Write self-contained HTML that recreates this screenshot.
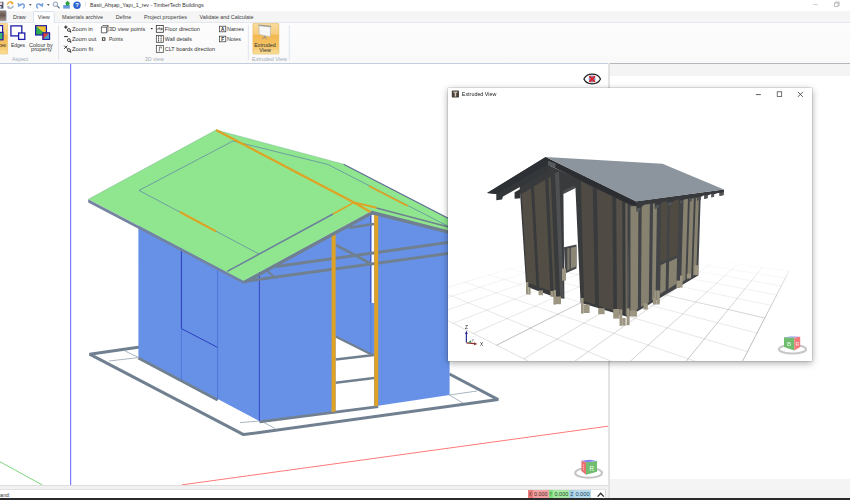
<!DOCTYPE html>
<html><head><meta charset="utf-8"><title>TimberTech Buildings</title>
<style>
html,body{margin:0;padding:0;}
body{width:850px;height:500px;overflow:hidden;position:relative;background:#fff;font-family:"Liberation Sans",sans-serif;font-size:5.4px;color:#333;}
.abs{position:absolute;}

.t{position:absolute;white-space:nowrap;line-height:1;}

#titlebar{left:0;top:0;width:850px;height:10.5px;background:#fff;}
#tabrow{left:0;top:10.5px;width:850px;height:11.5px;background:#f5f5f6;}
#ribbon{left:0;top:21.6px;width:850px;height:40.6px;background:linear-gradient(#fdfdfd,#f9f9f9);border-top:1px solid #e3e8f0;border-bottom:1px solid #c3cfdf;box-sizing:content-box;z-index:2;}

</style></head><body>
<div class="abs" id="titlebar"></div><div class="abs" id="tabrow"></div><div class="abs" id="ribbon"></div>
<svg class="abs" style="left:0;top:0;z-index:4" width="850" height="66" viewBox="0 0 850 66">
<defs><linearGradient id="og" x1="0" y1="0" x2="0" y2="1"><stop offset="0" stop-color="#f9dc9e"/><stop offset="0.35" stop-color="#f7cd7c"/><stop offset="0.39" stop-color="#f3b84f"/><stop offset="0.75" stop-color="#f5c466"/><stop offset="1" stop-color="#fae09c"/></linearGradient><linearGradient id="bg2" x1="0" y1="0" x2="0" y2="1"><stop offset="0" stop-color="#907c70"/><stop offset="0.45" stop-color="#6a584e"/><stop offset="1" stop-color="#a8948a"/></linearGradient></defs>
<rect x="-3" y="1.8" width="6.4" height="6.8" fill="#46526e"/><rect x="-2" y="2.4" width="4.2" height="2.6" fill="#f6dada"/><rect x="-2" y="6" width="3.4" height="2.6" fill="#c8ccd6"/>
<path d="M7.4 4.6 A3.1 3.1 0 0 1 12.6 2.8" fill="none" stroke="#eda832" stroke-width="1.5"/><path d="M11.6 1.2 L14 3.6 L11 4.6 Z" fill="#eda832"/><path d="M13.2 5.6 A3.1 3.1 0 0 1 8 7.4" fill="none" stroke="#a9b6c6" stroke-width="1.5"/><path d="M9 9 L6.6 6.6 L9.6 5.6 Z" fill="#a9b6c6"/>
<path d="M19.4 5.6 Q22.6 2.6 24.2 5 Q25 6.6 23 8.4" fill="none" stroke="#7da4e2" stroke-width="1.5"/><path d="M17.6 2.6 L18 7 L21.8 5.4 Z" fill="#7da4e2"/>
<path d="M29 4.2 L31.6 4.2 L30.3 5.7 Z" fill="#222"/>
<path d="M41.6 5.6 Q38.4 2.6 36.8 5 Q36 6.6 38 8.4" fill="none" stroke="#7da4e2" stroke-width="1.5"/><path d="M43.4 2.6 L43 7 L39.2 5.4 Z" fill="#7da4e2"/>
<path d="M47 4.2 L49.6 4.2 L48.3 5.7 Z" fill="#222"/>
<circle cx="55.4" cy="4.2" r="2.3" fill="#eef4fa" stroke="#7a8a9a" stroke-width="0.8"/><line x1="57.2" y1="6.0" x2="59.6" y2="8.2" stroke="#6a7a8a" stroke-width="1.20" />
<rect x="63.2" y="5" width="6.6" height="3.6" fill="#6a9ae0"/><path d="M66 5.6 L66 3.4 L64.8 3.4 L67.6 0.8 L70.4 3.4 L69.2 3.4 L69.2 5.6 Z" fill="#2fa040"/>
<circle cx="77" cy="5.2" r="3.7" fill="#2a64d0"/><text x="77" y="7.4" font-size="6" font-weight="bold" fill="#fff" text-anchor="middle" font-family="Liberation Sans, sans-serif">?</text>
<line x1="85.4" y1="1.6" x2="85.4" y2="6.6" stroke="#d0d0d0" stroke-width="0.60" />
<text x="90.0" y="7.14" font-size="5.5" fill="#333" font-family="Liberation Sans, sans-serif" textLength="113.6" lengthAdjust="spacingAndGlyphs">Basit_Ahşap_Yapı_1_rev - TimberTech Buildings</text>
<line x1="813.2" y1="4.6" x2="817.8" y2="4.6" stroke="#bbb" stroke-width="0.70" />
<rect x="834.4" y="3" width="3.6" height="3.6" fill="#fff" stroke="#999" stroke-width="0.6"/><path d="M835.6 3 L835.6 2 L839.2 2 L839.2 5.6 L838 5.6" fill="none" stroke="#999" stroke-width="0.6"/>
<rect x="-1" y="10.6" width="7.2" height="10.4" rx="0.8" fill="url(#bg2)" stroke="#9fb4d8" stroke-width="0.6"/>
<path d="M33.5 22.6 L33.5 12.4 Q33.5 11.6 34.3 11.6 L53.3 11.6 Q54.1 11.6 54.1 12.4 L54.1 22.6 Z" fill="#fff" stroke="#cdd8e8" stroke-width="0.7"/>
<rect x="33.9" y="21.6" width="19.8" height="2" fill="#fdfdfe"/>
<text x="13.0" y="19.41" font-size="5.7" fill="#3c3c3c" font-family="Liberation Sans, sans-serif" textLength="12.8" lengthAdjust="spacingAndGlyphs">Draw</text>
<text x="37.8" y="19.41" font-size="5.7" fill="#3c3c3c" font-family="Liberation Sans, sans-serif" textLength="12.0" lengthAdjust="spacingAndGlyphs">View</text>
<text x="62.1" y="19.41" font-size="5.7" fill="#3c3c3c" font-family="Liberation Sans, sans-serif" textLength="40.9" lengthAdjust="spacingAndGlyphs">Materials archive</text>
<text x="115.7" y="19.41" font-size="5.7" fill="#3c3c3c" font-family="Liberation Sans, sans-serif" textLength="15.5" lengthAdjust="spacingAndGlyphs">Define</text>
<text x="144.0" y="19.41" font-size="5.7" fill="#3c3c3c" font-family="Liberation Sans, sans-serif" textLength="43.0" lengthAdjust="spacingAndGlyphs">Project properties</text>
<text x="199.6" y="19.41" font-size="5.7" fill="#3c3c3c" font-family="Liberation Sans, sans-serif" textLength="53.9" lengthAdjust="spacingAndGlyphs">Validate and Calculate</text>
<rect x="-20" y="23.4" width="27.6" height="30.6" rx="1" fill="url(#og)" stroke="#e6b95e" stroke-width="0.6"/>
<rect x="-6" y="25.6" width="8.6" height="9.4" fill="#fff" stroke="#1c1ca8" stroke-width="1.2"/>
<rect x="-6" y="32.4" width="9" height="7.4" fill="#3cb371" stroke="#1c1ca8" stroke-width="1.2"/>
<text x="-7.2" y="46.51" font-size="5.7" fill="#333" font-family="Liberation Sans, sans-serif" textLength="13.2" lengthAdjust="spacingAndGlyphs">Faces</text>
<rect x="10.9" y="25.9" width="10.9" height="10" fill="#fff" stroke="#1c1ca8" stroke-width="1.3"/>
<rect x="18.6" y="33" width="6.2" height="6.4" fill="#fff" stroke="#1c1ca8" stroke-width="1.3"/>
<text x="11.0" y="46.51" font-size="5.7" fill="#333" font-family="Liberation Sans, sans-serif" textLength="14.1" lengthAdjust="spacingAndGlyphs">Edges</text>
<rect x="35.6" y="25.7" width="10.8" height="9.3" fill="#f2c230"/><path d="M35.6 25.7 L46.4 35 L35.6 35 Z" fill="#2eaa50"/><rect x="35.6" y="25.7" width="10.8" height="9.3" fill="none" stroke="#1c1ca8" stroke-width="1.2"/>
<rect x="42.8" y="32.8" width="6.8" height="6.6" fill="#d84040"/><path d="M42.8 39.4 L49.6 32.8 L49.6 39.4 Z" fill="#4aa0c8"/><rect x="42.8" y="32.8" width="6.8" height="6.6" fill="none" stroke="#1c1ca8" stroke-width="1.1"/>
<text x="28.9" y="46.51" font-size="5.7" fill="#333" font-family="Liberation Sans, sans-serif" textLength="24.0" lengthAdjust="spacingAndGlyphs">Colour by</text>
<text x="31.0" y="51.41" font-size="5.7" fill="#333" font-family="Liberation Sans, sans-serif" textLength="20.8" lengthAdjust="spacingAndGlyphs">property</text>
<text x="12.0" y="60.61" font-size="5.7" fill="#a3acb8" font-family="Liberation Sans, sans-serif" textLength="16.2" lengthAdjust="spacingAndGlyphs">Aspect</text>
<line x1="58.6" y1="25.0" x2="58.6" y2="60.0" stroke="#d3dbe6" stroke-width="0.70" />
<circle cx="68.9" cy="30.0" r="1.45" fill="none" stroke="#333" stroke-width="0.9"/>
<line x1="69.9" y1="31.1" x2="71.2" y2="32.4" stroke="#333" stroke-width="1.10" />
<line x1="64.2" y1="27.1" x2="67.4" y2="27.1" stroke="#222" stroke-width="1.10" />
<line x1="65.8" y1="25.5" x2="65.8" y2="28.7" stroke="#222" stroke-width="1.10" />
<text x="72.0" y="30.61" font-size="5.7" fill="#333" font-family="Liberation Sans, sans-serif" textLength="20.8" lengthAdjust="spacingAndGlyphs">Zoom in</text>
<circle cx="68.9" cy="40.1" r="1.45" fill="none" stroke="#333" stroke-width="0.9"/>
<line x1="69.9" y1="41.2" x2="71.2" y2="42.5" stroke="#333" stroke-width="1.10" />
<line x1="64.2" y1="36.6" x2="67.8" y2="36.6" stroke="#222" stroke-width="1.00" />
<text x="72.0" y="40.56" font-size="5.7" fill="#333" font-family="Liberation Sans, sans-serif" textLength="24.4" lengthAdjust="spacingAndGlyphs">Zoom out</text>
<circle cx="68.9" cy="50.1" r="1.45" fill="none" stroke="#333" stroke-width="0.9"/>
<line x1="69.9" y1="51.2" x2="71.2" y2="52.5" stroke="#333" stroke-width="1.10" />
<line x1="64.2" y1="45.6" x2="67.4" y2="48.8" stroke="#222" stroke-width="0.90" />
<line x1="67.4" y1="45.6" x2="64.2" y2="48.8" stroke="#222" stroke-width="0.90" />
<text x="72.0" y="50.51" font-size="5.7" fill="#333" font-family="Liberation Sans, sans-serif" textLength="21.0" lengthAdjust="spacingAndGlyphs">Zoom fit</text>
<path d="M101.4 27.2 L102.8 25.6 L108 25.6 L108 31.2 L106.6 32.8 L101.4 32.8 Z M101.4 27.2 L106.6 27.2 L106.6 32.8 M106.6 27.2 L108 25.6" fill="#fff" stroke="#333" stroke-width="0.7"/>
<text x="109.0" y="30.61" font-size="5.7" fill="#333" font-family="Liberation Sans, sans-serif" textLength="36.3" lengthAdjust="spacingAndGlyphs">3D view points</text>
<path d="M150.5 28.1 L153 28.1 L151.75 29.6 Z" fill="#222"/>
<rect x="102.4" y="37.8" width="2.5" height="2.5" fill="#fff" stroke="#333" stroke-width="0.9"/>
<text x="109.0" y="40.56" font-size="5.7" fill="#333" font-family="Liberation Sans, sans-serif" textLength="14.0" lengthAdjust="spacingAndGlyphs">Points</text>
<rect x="156.3" y="25.5" width="7" height="6.8" fill="#fff" stroke="#333" stroke-width="0.8"/><line x1="156.6" y1="29.0" x2="162.4" y2="29.0" stroke="#333" stroke-width="0.70" /><line x1="159.2" y1="27.2" x2="159.2" y2="29.0" stroke="#333" stroke-width="0.70" /><path d="M160.8 27.8 L162.4 29 L160.8 30.2" fill="none" stroke="#333" stroke-width="0.7"/>
<text x="164.8" y="30.61" font-size="5.7" fill="#333" font-family="Liberation Sans, sans-serif" textLength="35.0" lengthAdjust="spacingAndGlyphs">Floor direction</text>
<rect x="156.3" y="35.5" width="7" height="6.8" fill="#fff" stroke="#333" stroke-width="0.7"/><line x1="158.6" y1="36.0" x2="158.6" y2="42.0" stroke="#222" stroke-width="0.90" stroke-dasharray="1.4 0.7"/><line x1="161.1" y1="36.0" x2="161.1" y2="42.0" stroke="#222" stroke-width="0.90" stroke-dasharray="1.4 0.7"/>
<text x="164.8" y="40.56" font-size="5.7" fill="#333" font-family="Liberation Sans, sans-serif" textLength="27.2" lengthAdjust="spacingAndGlyphs">Wall details</text>
<rect x="156.3" y="45.5" width="7" height="6.8" fill="#fff" stroke="#333" stroke-width="0.7"/><line x1="159.4" y1="47.0" x2="159.4" y2="51.4" stroke="#333" stroke-width="0.60" /><path d="M159.4 47 L161.4 47 L161.4 48.6" fill="none" stroke="#333" stroke-width="0.6"/>
<text x="164.8" y="50.51" font-size="5.7" fill="#333" font-family="Liberation Sans, sans-serif" textLength="50.2" lengthAdjust="spacingAndGlyphs">CLT boards direction</text>
<rect x="219.4" y="26.2" width="6.4" height="5.6" fill="#fff" stroke="#333" stroke-width="0.7"/><text x="222.6" y="31" font-size="4.6" font-weight="bold" fill="#222" text-anchor="middle" font-family="Liberation Sans, sans-serif">A</text>
<text x="227.0" y="30.61" font-size="5.7" fill="#333" font-family="Liberation Sans, sans-serif" textLength="17.0" lengthAdjust="spacingAndGlyphs">Names</text>
<rect x="219.4" y="36.2" width="6.4" height="5.6" fill="#fff" stroke="#333" stroke-width="0.7"/><text x="222.6" y="41" font-size="4.6" font-weight="bold" fill="#222" text-anchor="middle" font-family="Liberation Sans, sans-serif">F</text>
<text x="227.0" y="40.56" font-size="5.7" fill="#333" font-family="Liberation Sans, sans-serif" textLength="14.0" lengthAdjust="spacingAndGlyphs">Notes</text>
<text x="144.8" y="60.61" font-size="5.7" fill="#a3acb8" font-family="Liberation Sans, sans-serif" textLength="19.0" lengthAdjust="spacingAndGlyphs">3D view</text>
<line x1="248.3" y1="25.0" x2="248.3" y2="60.0" stroke="#d3dbe6" stroke-width="0.70" />
<rect x="252.9" y="23.4" width="26" height="30.6" rx="1" fill="url(#og)" stroke="#e6b95e" stroke-width="0.6"/>
<line x1="264.7" y1="35.6" x2="264.7" y2="38.0" stroke="#8c8c8c" stroke-width="0.90" /><line x1="264.7" y1="36.4" x2="262.2" y2="39.4" stroke="#8c8c8c" stroke-width="0.90" /><line x1="264.7" y1="36.4" x2="266.6" y2="39.4" stroke="#8c8c8c" stroke-width="0.90" />
<path d="M258.9 25.8 L270.6 27 L270.2 36.7 L259.3 34.6 Z" fill="#f7f7f7" stroke="#b9b9b9" stroke-width="0.7"/>
<path d="M258.3 25 L271.2 26.4" fill="none" stroke="#9a9a9a" stroke-width="1.1"/>
<text x="254.2" y="46.81" font-size="5.7" fill="#333" font-family="Liberation Sans, sans-serif" textLength="21.6" lengthAdjust="spacingAndGlyphs">Extruded</text>
<text x="259.2" y="51.81" font-size="5.7" fill="#333" font-family="Liberation Sans, sans-serif" textLength="11.7" lengthAdjust="spacingAndGlyphs">View</text>
<text x="252.0" y="60.61" font-size="5.7" fill="#a3acb8" font-family="Liberation Sans, sans-serif" textLength="35.0" lengthAdjust="spacingAndGlyphs">Extruded View</text>
<line x1="289.3" y1="25.0" x2="289.3" y2="60.0" stroke="#d3dbe6" stroke-width="0.70" />
</svg>
<div class="abs" id="viewport" style="left:0;top:64px;width:608px;height:421px;background:#fff;overflow:hidden;">
<svg class="abs" style="left:0;top:-64px" width="850" height="500" viewBox="0 0 850 500">
<line x1="70.6" y1="64.0" x2="70.6" y2="485.0" stroke="#7c7cff" stroke-width="1.20" />
<line x1="0.0" y1="461.8" x2="42.4" y2="485.0" stroke="#6fd06f" stroke-width="0.90" />
<line x1="181.6" y1="484.9" x2="608.0" y2="426.2" stroke="#ff6a6a" stroke-width="0.90" />
<polyline points="449.4,374.0 498.2,399.6 243.6,434.6 89.6,354.2 140.0,347.0" fill="none" stroke="#708090" stroke-width="3.00" stroke-linejoin="bevel"/>
<line x1="109.0" y1="361.0" x2="138.4" y2="357.6" stroke="#8796a5" stroke-width="0.70" />
<line x1="125.0" y1="351.0" x2="138.4" y2="357.4" stroke="#8796a5" stroke-width="0.70" />
<line x1="240.0" y1="422.6" x2="259.4" y2="421.0" stroke="#8796a5" stroke-width="0.70" />
<line x1="262.0" y1="421.5" x2="275.0" y2="428.5" stroke="#8796a5" stroke-width="0.70" />
<line x1="449.4" y1="395.0" x2="477.0" y2="391.0" stroke="#8796a5" stroke-width="0.70" />
<line x1="449.4" y1="395.0" x2="463.0" y2="403.0" stroke="#8796a5" stroke-width="0.70" />
<polygon points="138.4,222.0 259.4,268.0 259.4,421.0 138.4,357.0" fill="#6691e6" />
<polygon points="259.4,272.0 371.0,211.5 449.6,232.0 449.6,395.0 378.0,405.8 333.6,411.6 259.4,421.0" fill="#6691e6" />
<polygon points="335.6,336.0 372.0,354.5 374.0,354.5 374.0,406.5 335.6,411.6" fill="#fff" />
<polygon points="371.4,215.0 374.2,215.0 374.2,303.0 371.4,303.0" fill="#fff" />
<line x1="370.8" y1="214.0" x2="370.8" y2="303.0" stroke="#2a3cc0" stroke-width="0.90" />
<line x1="370.8" y1="303.0" x2="370.8" y2="354.0" stroke="#4a6fd8" stroke-width="0.70" />
<line x1="335.6" y1="336.5" x2="373.0" y2="355.3" stroke="#708090" stroke-width="2.20" />
<line x1="335.6" y1="359.5" x2="374.0" y2="355.0" stroke="#708090" stroke-width="2.40" />
<line x1="335.6" y1="382.8" x2="374.0" y2="378.0" stroke="#708090" stroke-width="2.40" />
<line x1="138.4" y1="358.0" x2="217.6" y2="400.0" stroke="#708090" stroke-width="2.90" />
<line x1="259.4" y1="421.8" x2="378.2" y2="406.6" stroke="#708090" stroke-width="2.70" />
<line x1="181.4" y1="240.0" x2="181.4" y2="328.6" stroke="#2a3cc0" stroke-width="1.00" />
<line x1="181.4" y1="328.6" x2="217.6" y2="347.4" stroke="#2a3cc0" stroke-width="1.00" />
<line x1="181.4" y1="328.6" x2="181.4" y2="380.5" stroke="#4a6fd8" stroke-width="0.70" />
<line x1="217.6" y1="255.0" x2="217.6" y2="399.5" stroke="#4a6fd8" stroke-width="0.80" />
<line x1="259.4" y1="272.0" x2="259.4" y2="421.0" stroke="#2a3cc0" stroke-width="0.90" />
<line x1="244.0" y1="281.4" x2="449.6" y2="253.3" stroke="#708090" stroke-width="3.00" />
<line x1="276.0" y1="266.6" x2="449.6" y2="242.3" stroke="#708090" stroke-width="3.00" />
<line x1="336.0" y1="245.0" x2="370.5" y2="263.5" stroke="#708090" stroke-width="2.60" />
<line x1="349.5" y1="227.6" x2="374.0" y2="224.0" stroke="#708090" stroke-width="2.60" />
<line x1="266.0" y1="270.0" x2="273.5" y2="276.0" stroke="#708090" stroke-width="2.00" />
<polygon points="331.6,234.0 335.6,232.0 335.6,411.4 331.6,411.9" fill="#dea224" />
<polygon points="374.2,213.5 378.2,214.0 378.2,405.8 374.2,406.3" fill="#dea224" />
<polygon points="216.0,130.0 343.6,164.2 449.6,219.0 449.6,232.5 371.0,211.5" fill="#90e68e" />
<polygon points="216.0,130.0 88.4,199.3 243.5,281.0 371.0,211.5" fill="#90e68e" />
<polygon points="88.2,199.2 243.5,281.0 244.0,284.0 88.2,202.4" fill="#7383a0" />
<line x1="244.3" y1="282.4" x2="372.2" y2="212.7" stroke="#708090" stroke-width="3.30" />
<line x1="371.0" y1="212.2" x2="449.6" y2="232.4" stroke="#708090" stroke-width="3.50" />
<line x1="376.4" y1="208.0" x2="449.6" y2="227.2" stroke="#708090" stroke-width="1.70" />
<line x1="343.6" y1="164.2" x2="449.6" y2="219.0" stroke="#5f6a94" stroke-width="1.20" />
<line x1="216.0" y1="130.0" x2="343.6" y2="164.2" stroke="#7fc090" stroke-width="0.60" />
<line x1="216.0" y1="130.0" x2="88.4" y2="199.3" stroke="#7fc090" stroke-width="0.60" />
<polyline points="259.0,254.0 139.0,190.4 233.0,141.0 328.0,164.5 449.6,227.0" fill="none" stroke="#5d7fa8" stroke-width="0.70" />
<line x1="227.2" y1="271.4" x2="333.0" y2="214.0" stroke="#6c7f9c" stroke-width="1.50" />
<line x1="180.0" y1="212.0" x2="216.0" y2="231.4" stroke="#dea224" stroke-width="2.20" />
<line x1="369.0" y1="186.0" x2="407.6" y2="206.0" stroke="#dea224" stroke-width="1.80" />
<polyline points="216.0,130.0 354.0,202.4 370.5,212.0" fill="none" stroke="#dea224" stroke-width="2.30" />
<line x1="333.0" y1="214.0" x2="354.0" y2="202.4" stroke="#dea224" stroke-width="1.60" />
<line x1="354.0" y1="202.4" x2="376.5" y2="207.8" stroke="#dea224" stroke-width="2.00" />
<ellipse cx="588.6" cy="472.9" rx="13.4" ry="4.9" fill="none" stroke="#c3c3c3" stroke-width="2.0"/>
<polygon points="581.4,460.8 586.0,462.2 586.0,474.7 581.4,471.1" fill="#ea6f6f" />
<polygon points="586.0,462.2 597.0,461.0 597.0,471.7 586.0,474.7" fill="#70bd70" />
<polygon points="581.4,460.8 589.8,459.8 597.0,461.0 586.0,462.2" fill="#8282ee" />
<text x="591.7" y="471.1" font-size="6.4" fill="#f2fff2" text-anchor="middle" font-family="Liberation Sans, sans-serif">R</text>
<line x1="583.6" y1="464.5" x2="583.6" y2="470.1" stroke="#fbd0d0" stroke-width="0.90" stroke-dasharray="1.6 0.8"/>
<path d="M583.9 79 C587 72.6 597.4 72.6 600.5 79 C597.4 85.4 587 85.4 583.9 79 Z" fill="#fff" stroke="#222" stroke-width="1.3" stroke-linejoin="round"/>
<circle cx="592.1" cy="79.0" r="3.4" fill="#7f92c6"/>
<line x1="589.4" y1="76.1" x2="594.8" y2="81.9" stroke="#e02020" stroke-width="1.80" />
<line x1="594.8" y1="76.1" x2="589.4" y2="81.9" stroke="#e02020" stroke-width="1.80" />
</svg>
</div>
<div class="abs" id="rightpanel" style="left:608px;top:63.4px;width:242px;height:434.6px;background:#fff;border-left:2px solid #e3e3e3;z-index:3;"><div class="abs" style="left:0;top:0;width:242px;height:12.7px;background:#f4f4f4;border-top:1.3px solid #b4b8bc;box-sizing:border-box;"></div><div class="abs" style="left:0;top:415.6px;width:242px;height:19.4px;background:#f4f4f4;"></div></div>
<div class="abs" id="status" style="left:0;top:485px;width:608px;height:13.4px;background:#f1f1f1;border-top:0.6px solid #dedede;">
<div class="abs" style="left:0;top:3.4px;width:605.4px;height:10px;background:#fff;border-right:0.6px solid #d8d8d8;border-top:0.6px solid #e2e2e2;"></div>
<div class="abs" style="left:528px;top:4.4px;width:20.6px;height:8.2px;background:#f0a2a2;"></div><div class="abs" style="left:528px;top:4.4px;width:4.6px;height:8.2px;background:#e87c7c;"></div>
<div class="abs" style="left:548.6px;top:4.4px;width:20.8px;height:8.2px;background:#a4e8a4;"></div><div class="abs" style="left:548.6px;top:4.4px;width:4.6px;height:8.2px;background:#7fe07f;"></div>
<div class="abs" style="left:569.4px;top:4.4px;width:21.6px;height:8.2px;background:#b4daec;"></div><div class="abs" style="left:569.4px;top:4.4px;width:4.6px;height:8.2px;background:#a6cfe6;"></div>
<svg class="abs" style="left:0;top:0" width="608" height="14" viewBox="0 485 608 14">
<text x="-14.2" y="495.71" font-size="5.4" fill="#333" font-family="Liberation Sans, sans-serif" textLength="24.2" lengthAdjust="spacingAndGlyphs">Command:</text>
<text x="529.0" y="495.28" font-size="5.0" fill="#4a2222" font-family="Liberation Sans, sans-serif" textLength="2.6" lengthAdjust="spacingAndGlyphs">X</text><text x="534.0" y="495.28" font-size="5.0" fill="#4a2222" font-family="Liberation Sans, sans-serif" textLength="13.4" lengthAdjust="spacingAndGlyphs">0.000</text>
<text x="549.6" y="495.28" font-size="5.0" fill="#224a22" font-family="Liberation Sans, sans-serif" textLength="2.6" lengthAdjust="spacingAndGlyphs">Y</text><text x="554.6" y="495.28" font-size="5.0" fill="#224a22" font-family="Liberation Sans, sans-serif" textLength="13.6" lengthAdjust="spacingAndGlyphs">0.000</text>
<text x="570.4" y="495.28" font-size="5.0" fill="#223a5a" font-family="Liberation Sans, sans-serif" textLength="2.6" lengthAdjust="spacingAndGlyphs">Z</text><text x="575.4" y="495.28" font-size="5.0" fill="#223a5a" font-family="Liberation Sans, sans-serif" textLength="14.2" lengthAdjust="spacingAndGlyphs">0.000</text>
<path d="M597.6 495.6 L600.7 492.2 L603.8 495.6" fill="none" stroke="#333" stroke-width="1.4"/>
</svg></div>
<div class="abs" style="left:0;top:498.2px;width:850px;height:1.8px;background:#2a2a2a;"></div>
<div class="abs" id="popup" style="z-index:5;left:447.5px;top:87.5px;width:364px;height:273px;background:#fff;box-shadow:0 2px 7px rgba(0,0,0,0.35),0 0 1px rgba(0,0,0,0.5);overflow:hidden;">
<svg class="abs" style="left:-447.5px;top:-87.5px;will-change:transform" width="850" height="500" viewBox="0 0 850 500">
<line x1="437.6" y1="290.2" x2="451.8" y2="286.0" stroke="#666" stroke-width="0.65" stroke-opacity="0.13"/>
<line x1="451.8" y1="286.0" x2="465.0" y2="282.1" stroke="#666" stroke-width="0.65" stroke-opacity="0.12"/>
<line x1="465.0" y1="282.1" x2="477.4" y2="278.4" stroke="#666" stroke-width="0.65" stroke-opacity="0.11"/>
<line x1="477.4" y1="278.4" x2="489.0" y2="275.0" stroke="#666" stroke-width="0.65" stroke-opacity="0.09"/>
<line x1="489.0" y1="275.0" x2="499.8" y2="271.8" stroke="#666" stroke-width="0.65" stroke-opacity="0.08"/>
<line x1="499.8" y1="271.8" x2="510.0" y2="268.8" stroke="#666" stroke-width="0.65" stroke-opacity="0.06"/>
<line x1="510.0" y1="268.8" x2="519.7" y2="266.0" stroke="#666" stroke-width="0.65" stroke-opacity="0.05"/>
<line x1="519.7" y1="266.0" x2="528.7" y2="263.3" stroke="#666" stroke-width="0.65" stroke-opacity="0.03"/>
<line x1="436.6" y1="301.1" x2="452.2" y2="296.1" stroke="#666" stroke-width="0.65" stroke-opacity="0.17"/>
<line x1="452.2" y1="296.1" x2="466.6" y2="291.5" stroke="#666" stroke-width="0.65" stroke-opacity="0.16"/>
<line x1="466.6" y1="291.5" x2="479.9" y2="287.2" stroke="#666" stroke-width="0.65" stroke-opacity="0.14"/>
<line x1="479.9" y1="287.2" x2="492.4" y2="283.2" stroke="#666" stroke-width="0.65" stroke-opacity="0.13"/>
<line x1="492.4" y1="283.2" x2="504.0" y2="279.5" stroke="#666" stroke-width="0.65" stroke-opacity="0.11"/>
<line x1="504.0" y1="279.5" x2="514.9" y2="276.0" stroke="#666" stroke-width="0.65" stroke-opacity="0.10"/>
<line x1="514.9" y1="276.0" x2="525.0" y2="272.7" stroke="#666" stroke-width="0.65" stroke-opacity="0.08"/>
<line x1="525.0" y1="272.7" x2="534.6" y2="269.6" stroke="#666" stroke-width="0.65" stroke-opacity="0.07"/>
<line x1="534.6" y1="269.6" x2="543.6" y2="266.7" stroke="#666" stroke-width="0.65" stroke-opacity="0.06"/>
<line x1="543.6" y1="266.7" x2="552.1" y2="264.0" stroke="#666" stroke-width="0.65" stroke-opacity="0.04"/>
<line x1="552.1" y1="264.0" x2="560.1" y2="261.4" stroke="#666" stroke-width="0.65" stroke-opacity="0.03"/>
<line x1="560.1" y1="261.4" x2="567.7" y2="259.0" stroke="#666" stroke-width="0.65" stroke-opacity="0.02"/>
<line x1="567.7" y1="259.0" x2="574.9" y2="256.7" stroke="#666" stroke-width="0.65" stroke-opacity="0.02"/>
<line x1="574.9" y1="256.7" x2="581.7" y2="254.5" stroke="#666" stroke-width="0.65" stroke-opacity="0.02"/>
<line x1="581.7" y1="254.5" x2="588.2" y2="252.4" stroke="#666" stroke-width="0.65" stroke-opacity="0.02"/>
<line x1="588.2" y1="252.4" x2="594.3" y2="250.4" stroke="#666" stroke-width="0.65" stroke-opacity="0.02"/>
<line x1="594.3" y1="250.4" x2="600.2" y2="248.6" stroke="#666" stroke-width="0.65" stroke-opacity="0.02"/>
<line x1="600.2" y1="248.6" x2="605.8" y2="246.8" stroke="#666" stroke-width="0.65" stroke-opacity="0.02"/>
<line x1="605.8" y1="246.8" x2="611.1" y2="245.0" stroke="#666" stroke-width="0.65" stroke-opacity="0.02"/>
<line x1="435.4" y1="314.4" x2="452.6" y2="308.3" stroke="#666" stroke-width="0.65" stroke-opacity="0.22"/>
<line x1="452.6" y1="308.3" x2="468.4" y2="302.8" stroke="#666" stroke-width="0.65" stroke-opacity="0.20"/>
<line x1="468.4" y1="302.8" x2="482.9" y2="297.6" stroke="#666" stroke-width="0.65" stroke-opacity="0.19"/>
<line x1="482.9" y1="297.6" x2="496.4" y2="292.9" stroke="#666" stroke-width="0.65" stroke-opacity="0.17"/>
<line x1="496.4" y1="292.9" x2="508.9" y2="288.5" stroke="#666" stroke-width="0.65" stroke-opacity="0.16"/>
<line x1="508.9" y1="288.5" x2="520.5" y2="284.4" stroke="#666" stroke-width="0.65" stroke-opacity="0.14"/>
<line x1="520.5" y1="284.4" x2="531.3" y2="280.5" stroke="#666" stroke-width="0.65" stroke-opacity="0.12"/>
<line x1="531.3" y1="280.5" x2="541.4" y2="277.0" stroke="#666" stroke-width="0.65" stroke-opacity="0.11"/>
<line x1="541.4" y1="277.0" x2="550.9" y2="273.6" stroke="#666" stroke-width="0.65" stroke-opacity="0.09"/>
<line x1="550.9" y1="273.6" x2="559.8" y2="270.5" stroke="#666" stroke-width="0.65" stroke-opacity="0.08"/>
<line x1="559.8" y1="270.5" x2="568.1" y2="267.5" stroke="#666" stroke-width="0.65" stroke-opacity="0.06"/>
<line x1="568.1" y1="267.5" x2="576.0" y2="264.8" stroke="#666" stroke-width="0.65" stroke-opacity="0.05"/>
<line x1="576.0" y1="264.8" x2="583.4" y2="262.1" stroke="#666" stroke-width="0.65" stroke-opacity="0.03"/>
<line x1="583.4" y1="262.1" x2="590.5" y2="259.6" stroke="#666" stroke-width="0.65" stroke-opacity="0.02"/>
<line x1="590.5" y1="259.6" x2="597.1" y2="257.3" stroke="#666" stroke-width="0.65" stroke-opacity="0.02"/>
<line x1="597.1" y1="257.3" x2="603.4" y2="255.1" stroke="#666" stroke-width="0.65" stroke-opacity="0.02"/>
<line x1="603.4" y1="255.1" x2="609.4" y2="252.9" stroke="#666" stroke-width="0.65" stroke-opacity="0.02"/>
<line x1="609.4" y1="252.9" x2="615.1" y2="250.9" stroke="#666" stroke-width="0.65" stroke-opacity="0.02"/>
<line x1="615.1" y1="250.9" x2="620.5" y2="249.0" stroke="#666" stroke-width="0.65" stroke-opacity="0.02"/>
<line x1="620.5" y1="249.0" x2="625.7" y2="247.2" stroke="#666" stroke-width="0.65" stroke-opacity="0.02"/>
<line x1="453.2" y1="323.3" x2="470.6" y2="316.5" stroke="#666" stroke-width="0.65" stroke-opacity="0.25"/>
<line x1="470.6" y1="316.5" x2="486.6" y2="310.2" stroke="#666" stroke-width="0.65" stroke-opacity="0.23"/>
<line x1="486.6" y1="310.2" x2="501.2" y2="304.5" stroke="#666" stroke-width="0.65" stroke-opacity="0.22"/>
<line x1="501.2" y1="304.5" x2="514.7" y2="299.2" stroke="#666" stroke-width="0.65" stroke-opacity="0.20"/>
<line x1="514.7" y1="299.2" x2="527.1" y2="294.3" stroke="#666" stroke-width="0.65" stroke-opacity="0.19"/>
<line x1="527.1" y1="294.3" x2="538.7" y2="289.8" stroke="#666" stroke-width="0.65" stroke-opacity="0.17"/>
<line x1="538.7" y1="289.8" x2="549.4" y2="285.6" stroke="#666" stroke-width="0.65" stroke-opacity="0.15"/>
<line x1="549.4" y1="285.6" x2="559.3" y2="281.6" stroke="#666" stroke-width="0.65" stroke-opacity="0.14"/>
<line x1="559.3" y1="281.6" x2="568.7" y2="278.0" stroke="#666" stroke-width="0.65" stroke-opacity="0.12"/>
<line x1="568.7" y1="278.0" x2="577.4" y2="274.6" stroke="#666" stroke-width="0.65" stroke-opacity="0.11"/>
<line x1="577.4" y1="274.6" x2="585.5" y2="271.4" stroke="#666" stroke-width="0.65" stroke-opacity="0.09"/>
<line x1="585.5" y1="271.4" x2="593.2" y2="268.3" stroke="#666" stroke-width="0.65" stroke-opacity="0.07"/>
<line x1="593.2" y1="268.3" x2="600.5" y2="265.5" stroke="#666" stroke-width="0.65" stroke-opacity="0.06"/>
<line x1="600.5" y1="265.5" x2="607.3" y2="262.8" stroke="#666" stroke-width="0.65" stroke-opacity="0.04"/>
<line x1="607.3" y1="262.8" x2="613.7" y2="260.3" stroke="#666" stroke-width="0.65" stroke-opacity="0.03"/>
<line x1="613.7" y1="260.3" x2="619.8" y2="257.9" stroke="#666" stroke-width="0.65" stroke-opacity="0.02"/>
<line x1="619.8" y1="257.9" x2="625.6" y2="255.6" stroke="#666" stroke-width="0.65" stroke-opacity="0.02"/>
<line x1="625.6" y1="255.6" x2="631.1" y2="253.5" stroke="#666" stroke-width="0.65" stroke-opacity="0.02"/>
<line x1="631.1" y1="253.5" x2="636.3" y2="251.4" stroke="#666" stroke-width="0.65" stroke-opacity="0.02"/>
<line x1="636.3" y1="251.4" x2="641.2" y2="249.5" stroke="#666" stroke-width="0.65" stroke-opacity="0.02"/>
<line x1="473.4" y1="333.5" x2="491.0" y2="325.7" stroke="#666" stroke-width="0.65" stroke-opacity="0.29"/>
<line x1="491.0" y1="325.7" x2="507.1" y2="318.6" stroke="#666" stroke-width="0.65" stroke-opacity="0.27"/>
<line x1="507.1" y1="318.6" x2="521.7" y2="312.1" stroke="#666" stroke-width="0.65" stroke-opacity="0.26"/>
<line x1="521.7" y1="312.1" x2="535.1" y2="306.2" stroke="#666" stroke-width="0.65" stroke-opacity="0.24"/>
<line x1="535.1" y1="306.2" x2="547.4" y2="300.7" stroke="#666" stroke-width="0.65" stroke-opacity="0.22"/>
<line x1="547.4" y1="300.7" x2="558.8" y2="295.7" stroke="#666" stroke-width="0.65" stroke-opacity="0.20"/>
<line x1="558.8" y1="295.7" x2="569.3" y2="291.1" stroke="#666" stroke-width="0.65" stroke-opacity="0.19"/>
<line x1="569.3" y1="291.1" x2="579.1" y2="286.8" stroke="#666" stroke-width="0.65" stroke-opacity="0.17"/>
<line x1="579.1" y1="286.8" x2="588.2" y2="282.8" stroke="#666" stroke-width="0.65" stroke-opacity="0.15"/>
<line x1="588.2" y1="282.8" x2="596.6" y2="279.0" stroke="#666" stroke-width="0.65" stroke-opacity="0.14"/>
<line x1="596.6" y1="279.0" x2="604.5" y2="275.5" stroke="#666" stroke-width="0.65" stroke-opacity="0.12"/>
<line x1="604.5" y1="275.5" x2="612.0" y2="272.2" stroke="#666" stroke-width="0.65" stroke-opacity="0.10"/>
<line x1="612.0" y1="272.2" x2="618.9" y2="269.2" stroke="#666" stroke-width="0.65" stroke-opacity="0.08"/>
<line x1="618.9" y1="269.2" x2="625.5" y2="266.3" stroke="#666" stroke-width="0.65" stroke-opacity="0.07"/>
<line x1="625.5" y1="266.3" x2="631.7" y2="263.5" stroke="#666" stroke-width="0.65" stroke-opacity="0.05"/>
<line x1="631.7" y1="263.5" x2="637.5" y2="261.0" stroke="#666" stroke-width="0.65" stroke-opacity="0.03"/>
<line x1="637.5" y1="261.0" x2="643.0" y2="258.5" stroke="#666" stroke-width="0.65" stroke-opacity="0.02"/>
<line x1="643.0" y1="258.5" x2="648.2" y2="256.2" stroke="#666" stroke-width="0.65" stroke-opacity="0.02"/>
<line x1="648.2" y1="256.2" x2="653.2" y2="254.0" stroke="#666" stroke-width="0.65" stroke-opacity="0.02"/>
<line x1="653.2" y1="254.0" x2="657.9" y2="252.0" stroke="#666" stroke-width="0.65" stroke-opacity="0.02"/>
<line x1="496.7" y1="345.2" x2="514.4" y2="336.2" stroke="#666" stroke-width="0.65" stroke-opacity="0.68"/>
<line x1="514.4" y1="336.2" x2="530.4" y2="328.1" stroke="#666" stroke-width="0.65" stroke-opacity="0.67"/>
<line x1="530.4" y1="328.1" x2="544.9" y2="320.8" stroke="#666" stroke-width="0.65" stroke-opacity="0.63"/>
<line x1="544.9" y1="320.8" x2="558.1" y2="314.1" stroke="#666" stroke-width="0.65" stroke-opacity="0.60"/>
<line x1="558.1" y1="314.1" x2="570.2" y2="308.0" stroke="#666" stroke-width="0.65" stroke-opacity="0.56"/>
<line x1="570.2" y1="308.0" x2="581.3" y2="302.4" stroke="#666" stroke-width="0.65" stroke-opacity="0.52"/>
<line x1="581.3" y1="302.4" x2="591.5" y2="297.2" stroke="#666" stroke-width="0.65" stroke-opacity="0.48"/>
<line x1="591.5" y1="297.2" x2="600.9" y2="292.5" stroke="#666" stroke-width="0.65" stroke-opacity="0.44"/>
<line x1="600.9" y1="292.5" x2="609.6" y2="288.0" stroke="#666" stroke-width="0.65" stroke-opacity="0.40"/>
<line x1="609.6" y1="288.0" x2="617.8" y2="283.9" stroke="#666" stroke-width="0.65" stroke-opacity="0.36"/>
<line x1="617.8" y1="283.9" x2="625.3" y2="280.1" stroke="#666" stroke-width="0.65" stroke-opacity="0.32"/>
<line x1="625.3" y1="280.1" x2="632.4" y2="276.5" stroke="#666" stroke-width="0.65" stroke-opacity="0.29"/>
<line x1="632.4" y1="276.5" x2="639.0" y2="273.2" stroke="#666" stroke-width="0.65" stroke-opacity="0.25"/>
<line x1="639.0" y1="273.2" x2="645.3" y2="270.0" stroke="#666" stroke-width="0.65" stroke-opacity="0.21"/>
<line x1="645.3" y1="270.0" x2="651.1" y2="267.1" stroke="#666" stroke-width="0.65" stroke-opacity="0.17"/>
<line x1="651.1" y1="267.1" x2="656.6" y2="264.3" stroke="#666" stroke-width="0.65" stroke-opacity="0.13"/>
<line x1="656.6" y1="264.3" x2="661.8" y2="261.7" stroke="#666" stroke-width="0.65" stroke-opacity="0.09"/>
<line x1="661.8" y1="261.7" x2="666.7" y2="259.2" stroke="#666" stroke-width="0.65" stroke-opacity="0.05"/>
<line x1="666.7" y1="259.2" x2="671.3" y2="256.8" stroke="#666" stroke-width="0.65" stroke-opacity="0.05"/>
<line x1="671.3" y1="256.8" x2="675.7" y2="254.6" stroke="#666" stroke-width="0.65" stroke-opacity="0.05"/>
<line x1="523.8" y1="358.8" x2="541.4" y2="348.3" stroke="#666" stroke-width="0.65" stroke-opacity="0.36"/>
<line x1="541.4" y1="348.3" x2="557.2" y2="339.0" stroke="#666" stroke-width="0.65" stroke-opacity="0.36"/>
<line x1="557.2" y1="339.0" x2="571.3" y2="330.6" stroke="#666" stroke-width="0.65" stroke-opacity="0.36"/>
<line x1="571.3" y1="330.6" x2="584.1" y2="323.0" stroke="#666" stroke-width="0.65" stroke-opacity="0.34"/>
<line x1="584.1" y1="323.0" x2="595.8" y2="316.1" stroke="#666" stroke-width="0.65" stroke-opacity="0.32"/>
<line x1="595.8" y1="316.1" x2="606.4" y2="309.8" stroke="#666" stroke-width="0.65" stroke-opacity="0.30"/>
<line x1="606.4" y1="309.8" x2="616.2" y2="304.1" stroke="#666" stroke-width="0.65" stroke-opacity="0.28"/>
<line x1="616.2" y1="304.1" x2="625.2" y2="298.8" stroke="#666" stroke-width="0.65" stroke-opacity="0.26"/>
<line x1="625.2" y1="298.8" x2="633.4" y2="293.9" stroke="#666" stroke-width="0.65" stroke-opacity="0.24"/>
<line x1="633.4" y1="293.9" x2="641.1" y2="289.3" stroke="#666" stroke-width="0.65" stroke-opacity="0.22"/>
<line x1="641.1" y1="289.3" x2="648.2" y2="285.1" stroke="#666" stroke-width="0.65" stroke-opacity="0.20"/>
<line x1="648.2" y1="285.1" x2="654.8" y2="281.2" stroke="#666" stroke-width="0.65" stroke-opacity="0.18"/>
<line x1="654.8" y1="281.2" x2="661.0" y2="277.5" stroke="#666" stroke-width="0.65" stroke-opacity="0.16"/>
<line x1="661.0" y1="277.5" x2="666.8" y2="274.1" stroke="#666" stroke-width="0.65" stroke-opacity="0.14"/>
<line x1="666.8" y1="274.1" x2="672.2" y2="270.9" stroke="#666" stroke-width="0.65" stroke-opacity="0.12"/>
<line x1="672.2" y1="270.9" x2="677.3" y2="267.9" stroke="#666" stroke-width="0.65" stroke-opacity="0.10"/>
<line x1="677.3" y1="267.9" x2="682.1" y2="265.0" stroke="#666" stroke-width="0.65" stroke-opacity="0.08"/>
<line x1="682.1" y1="265.0" x2="686.6" y2="262.3" stroke="#666" stroke-width="0.65" stroke-opacity="0.06"/>
<line x1="686.6" y1="262.3" x2="690.9" y2="259.8" stroke="#666" stroke-width="0.65" stroke-opacity="0.04"/>
<line x1="690.9" y1="259.8" x2="695.0" y2="257.4" stroke="#666" stroke-width="0.65" stroke-opacity="0.03"/>
<line x1="572.9" y1="362.6" x2="588.1" y2="351.7" stroke="#666" stroke-width="0.65" stroke-opacity="0.40"/>
<line x1="588.1" y1="351.7" x2="601.7" y2="342.0" stroke="#666" stroke-width="0.65" stroke-opacity="0.40"/>
<line x1="601.7" y1="342.0" x2="613.9" y2="333.3" stroke="#666" stroke-width="0.65" stroke-opacity="0.40"/>
<line x1="613.9" y1="333.3" x2="624.9" y2="325.4" stroke="#666" stroke-width="0.65" stroke-opacity="0.40"/>
<line x1="624.9" y1="325.4" x2="634.9" y2="318.3" stroke="#666" stroke-width="0.65" stroke-opacity="0.37"/>
<line x1="634.9" y1="318.3" x2="643.9" y2="311.8" stroke="#666" stroke-width="0.65" stroke-opacity="0.35"/>
<line x1="643.9" y1="311.8" x2="652.3" y2="305.8" stroke="#666" stroke-width="0.65" stroke-opacity="0.33"/>
<line x1="652.3" y1="305.8" x2="659.9" y2="300.4" stroke="#666" stroke-width="0.65" stroke-opacity="0.30"/>
<line x1="659.9" y1="300.4" x2="667.0" y2="295.3" stroke="#666" stroke-width="0.65" stroke-opacity="0.28"/>
<line x1="667.0" y1="295.3" x2="673.5" y2="290.7" stroke="#666" stroke-width="0.65" stroke-opacity="0.26"/>
<line x1="673.5" y1="290.7" x2="679.5" y2="286.3" stroke="#666" stroke-width="0.65" stroke-opacity="0.23"/>
<line x1="679.5" y1="286.3" x2="685.2" y2="282.3" stroke="#666" stroke-width="0.65" stroke-opacity="0.21"/>
<line x1="685.2" y1="282.3" x2="690.4" y2="278.6" stroke="#666" stroke-width="0.65" stroke-opacity="0.19"/>
<line x1="690.4" y1="278.6" x2="695.3" y2="275.1" stroke="#666" stroke-width="0.65" stroke-opacity="0.17"/>
<line x1="695.3" y1="275.1" x2="699.9" y2="271.8" stroke="#666" stroke-width="0.65" stroke-opacity="0.14"/>
<line x1="699.9" y1="271.8" x2="704.2" y2="268.7" stroke="#666" stroke-width="0.65" stroke-opacity="0.12"/>
<line x1="704.2" y1="268.7" x2="708.2" y2="265.8" stroke="#666" stroke-width="0.65" stroke-opacity="0.10"/>
<line x1="708.2" y1="265.8" x2="712.1" y2="263.1" stroke="#666" stroke-width="0.65" stroke-opacity="0.07"/>
<line x1="712.1" y1="263.1" x2="715.7" y2="260.5" stroke="#666" stroke-width="0.65" stroke-opacity="0.05"/>
<line x1="624.5" y1="366.5" x2="637.0" y2="355.2" stroke="#666" stroke-width="0.65" stroke-opacity="0.47"/>
<line x1="637.0" y1="355.2" x2="648.2" y2="345.1" stroke="#666" stroke-width="0.65" stroke-opacity="0.47"/>
<line x1="648.2" y1="345.1" x2="658.2" y2="336.0" stroke="#666" stroke-width="0.65" stroke-opacity="0.47"/>
<line x1="658.2" y1="336.0" x2="667.2" y2="327.9" stroke="#666" stroke-width="0.65" stroke-opacity="0.47"/>
<line x1="667.2" y1="327.9" x2="675.4" y2="320.5" stroke="#666" stroke-width="0.65" stroke-opacity="0.45"/>
<line x1="675.4" y1="320.5" x2="682.8" y2="313.8" stroke="#666" stroke-width="0.65" stroke-opacity="0.42"/>
<line x1="682.8" y1="313.8" x2="689.6" y2="307.6" stroke="#666" stroke-width="0.65" stroke-opacity="0.39"/>
<line x1="689.6" y1="307.6" x2="695.8" y2="302.0" stroke="#666" stroke-width="0.65" stroke-opacity="0.36"/>
<line x1="695.8" y1="302.0" x2="701.6" y2="296.8" stroke="#666" stroke-width="0.65" stroke-opacity="0.34"/>
<line x1="701.6" y1="296.8" x2="706.9" y2="292.0" stroke="#666" stroke-width="0.65" stroke-opacity="0.31"/>
<line x1="706.9" y1="292.0" x2="711.8" y2="287.6" stroke="#666" stroke-width="0.65" stroke-opacity="0.28"/>
<line x1="711.8" y1="287.6" x2="716.3" y2="283.5" stroke="#666" stroke-width="0.65" stroke-opacity="0.26"/>
<line x1="716.3" y1="283.5" x2="720.6" y2="279.6" stroke="#666" stroke-width="0.65" stroke-opacity="0.23"/>
<line x1="720.6" y1="279.6" x2="724.5" y2="276.0" stroke="#666" stroke-width="0.65" stroke-opacity="0.20"/>
<line x1="724.5" y1="276.0" x2="728.2" y2="272.7" stroke="#666" stroke-width="0.65" stroke-opacity="0.18"/>
<line x1="728.2" y1="272.7" x2="731.7" y2="269.5" stroke="#666" stroke-width="0.65" stroke-opacity="0.15"/>
<line x1="731.7" y1="269.5" x2="735.0" y2="266.6" stroke="#666" stroke-width="0.65" stroke-opacity="0.12"/>
<line x1="735.0" y1="266.6" x2="738.1" y2="263.8" stroke="#666" stroke-width="0.65" stroke-opacity="0.10"/>
<line x1="678.5" y1="370.7" x2="688.2" y2="358.8" stroke="#666" stroke-width="0.65" stroke-opacity="0.56"/>
<line x1="688.2" y1="358.8" x2="696.7" y2="348.3" stroke="#666" stroke-width="0.65" stroke-opacity="0.56"/>
<line x1="696.7" y1="348.3" x2="704.4" y2="338.9" stroke="#666" stroke-width="0.65" stroke-opacity="0.56"/>
<line x1="704.4" y1="338.9" x2="711.2" y2="330.4" stroke="#666" stroke-width="0.65" stroke-opacity="0.56"/>
<line x1="711.2" y1="330.4" x2="717.4" y2="322.8" stroke="#666" stroke-width="0.65" stroke-opacity="0.54"/>
<line x1="717.4" y1="322.8" x2="723.1" y2="315.8" stroke="#666" stroke-width="0.65" stroke-opacity="0.51"/>
<line x1="723.1" y1="315.8" x2="728.2" y2="309.5" stroke="#666" stroke-width="0.65" stroke-opacity="0.48"/>
<line x1="728.2" y1="309.5" x2="732.9" y2="303.7" stroke="#666" stroke-width="0.65" stroke-opacity="0.45"/>
<line x1="732.9" y1="303.7" x2="737.2" y2="298.4" stroke="#666" stroke-width="0.65" stroke-opacity="0.42"/>
<line x1="737.2" y1="298.4" x2="741.2" y2="293.4" stroke="#666" stroke-width="0.65" stroke-opacity="0.38"/>
<line x1="741.2" y1="293.4" x2="744.9" y2="288.9" stroke="#666" stroke-width="0.65" stroke-opacity="0.35"/>
<line x1="744.9" y1="288.9" x2="748.4" y2="284.7" stroke="#666" stroke-width="0.65" stroke-opacity="0.32"/>
<line x1="748.4" y1="284.7" x2="751.6" y2="280.7" stroke="#666" stroke-width="0.65" stroke-opacity="0.29"/>
<line x1="751.6" y1="280.7" x2="754.5" y2="277.1" stroke="#666" stroke-width="0.65" stroke-opacity="0.26"/>
<line x1="754.5" y1="277.1" x2="757.3" y2="273.6" stroke="#666" stroke-width="0.65" stroke-opacity="0.22"/>
<line x1="757.3" y1="273.6" x2="759.9" y2="270.4" stroke="#666" stroke-width="0.65" stroke-opacity="0.19"/>
<line x1="759.9" y1="270.4" x2="762.4" y2="267.4" stroke="#666" stroke-width="0.65" stroke-opacity="0.16"/>
<line x1="741.8" y1="362.6" x2="747.5" y2="351.7" stroke="#666" stroke-width="0.65" stroke-opacity="0.67"/>
<line x1="747.5" y1="351.7" x2="752.5" y2="341.9" stroke="#666" stroke-width="0.65" stroke-opacity="0.67"/>
<line x1="752.5" y1="341.9" x2="757.0" y2="333.1" stroke="#666" stroke-width="0.65" stroke-opacity="0.67"/>
<line x1="757.0" y1="333.1" x2="761.1" y2="325.2" stroke="#666" stroke-width="0.65" stroke-opacity="0.67"/>
<line x1="761.1" y1="325.2" x2="764.8" y2="318.0" stroke="#666" stroke-width="0.65" stroke-opacity="0.63"/>
<line x1="764.8" y1="318.0" x2="768.2" y2="311.4" stroke="#666" stroke-width="0.65" stroke-opacity="0.59"/>
<line x1="768.2" y1="311.4" x2="771.3" y2="305.4" stroke="#666" stroke-width="0.65" stroke-opacity="0.55"/>
<line x1="771.3" y1="305.4" x2="774.1" y2="300.0" stroke="#666" stroke-width="0.65" stroke-opacity="0.51"/>
<line x1="774.1" y1="300.0" x2="776.7" y2="294.9" stroke="#666" stroke-width="0.65" stroke-opacity="0.48"/>
<line x1="776.7" y1="294.9" x2="779.1" y2="290.2" stroke="#666" stroke-width="0.65" stroke-opacity="0.44"/>
<line x1="779.1" y1="290.2" x2="781.3" y2="285.9" stroke="#666" stroke-width="0.65" stroke-opacity="0.40"/>
<line x1="781.3" y1="285.9" x2="783.4" y2="281.8" stroke="#666" stroke-width="0.65" stroke-opacity="0.36"/>
<line x1="783.4" y1="281.8" x2="785.3" y2="278.1" stroke="#666" stroke-width="0.65" stroke-opacity="0.32"/>
<line x1="785.3" y1="278.1" x2="787.1" y2="274.6" stroke="#666" stroke-width="0.65" stroke-opacity="0.28"/>
<line x1="787.1" y1="274.6" x2="788.8" y2="271.3" stroke="#666" stroke-width="0.65" stroke-opacity="0.24"/>
<line x1="444.0" y1="318.7" x2="453.2" y2="323.3" stroke="#666" stroke-width="0.65" stroke-opacity="0.29"/>
<line x1="453.2" y1="323.3" x2="462.9" y2="328.2" stroke="#666" stroke-width="0.65" stroke-opacity="0.30"/>
<line x1="462.9" y1="328.2" x2="473.4" y2="333.5" stroke="#666" stroke-width="0.65" stroke-opacity="0.31"/>
<line x1="473.4" y1="333.5" x2="484.6" y2="339.1" stroke="#666" stroke-width="0.65" stroke-opacity="0.32"/>
<line x1="484.6" y1="339.1" x2="496.7" y2="345.2" stroke="#666" stroke-width="0.65" stroke-opacity="0.32"/>
<line x1="496.7" y1="345.2" x2="509.7" y2="351.7" stroke="#666" stroke-width="0.65" stroke-opacity="0.32"/>
<line x1="509.7" y1="351.7" x2="523.8" y2="358.8" stroke="#666" stroke-width="0.65" stroke-opacity="0.32"/>
<line x1="523.8" y1="358.8" x2="539.1" y2="366.5" stroke="#666" stroke-width="0.65" stroke-opacity="0.32"/>
<line x1="444.7" y1="293.1" x2="452.2" y2="296.1" stroke="#666" stroke-width="0.65" stroke-opacity="0.18"/>
<line x1="452.2" y1="296.1" x2="460.1" y2="299.4" stroke="#666" stroke-width="0.65" stroke-opacity="0.19"/>
<line x1="460.1" y1="299.4" x2="468.4" y2="302.8" stroke="#666" stroke-width="0.65" stroke-opacity="0.20"/>
<line x1="468.4" y1="302.8" x2="477.2" y2="306.4" stroke="#666" stroke-width="0.65" stroke-opacity="0.21"/>
<line x1="477.2" y1="306.4" x2="486.6" y2="310.2" stroke="#666" stroke-width="0.65" stroke-opacity="0.22"/>
<line x1="486.6" y1="310.2" x2="496.5" y2="314.3" stroke="#666" stroke-width="0.65" stroke-opacity="0.24"/>
<line x1="496.5" y1="314.3" x2="507.1" y2="318.6" stroke="#666" stroke-width="0.65" stroke-opacity="0.25"/>
<line x1="507.1" y1="318.6" x2="518.4" y2="323.2" stroke="#666" stroke-width="0.65" stroke-opacity="0.26"/>
<line x1="518.4" y1="323.2" x2="530.4" y2="328.1" stroke="#666" stroke-width="0.65" stroke-opacity="0.27"/>
<line x1="530.4" y1="328.1" x2="543.3" y2="333.4" stroke="#666" stroke-width="0.65" stroke-opacity="0.28"/>
<line x1="543.3" y1="333.4" x2="557.2" y2="339.0" stroke="#666" stroke-width="0.65" stroke-opacity="0.29"/>
<line x1="557.2" y1="339.0" x2="572.1" y2="345.1" stroke="#666" stroke-width="0.65" stroke-opacity="0.29"/>
<line x1="572.1" y1="345.1" x2="588.1" y2="351.7" stroke="#666" stroke-width="0.65" stroke-opacity="0.29"/>
<line x1="588.1" y1="351.7" x2="605.5" y2="358.8" stroke="#666" stroke-width="0.65" stroke-opacity="0.29"/>
<line x1="605.5" y1="358.8" x2="624.5" y2="366.5" stroke="#666" stroke-width="0.65" stroke-opacity="0.29"/>
<line x1="465.0" y1="282.1" x2="472.3" y2="284.6" stroke="#666" stroke-width="0.65" stroke-opacity="0.12"/>
<line x1="472.3" y1="284.6" x2="479.9" y2="287.2" stroke="#666" stroke-width="0.65" stroke-opacity="0.13"/>
<line x1="479.9" y1="287.2" x2="488.0" y2="290.0" stroke="#666" stroke-width="0.65" stroke-opacity="0.15"/>
<line x1="488.0" y1="290.0" x2="496.4" y2="292.9" stroke="#666" stroke-width="0.65" stroke-opacity="0.16"/>
<line x1="496.4" y1="292.9" x2="505.3" y2="295.9" stroke="#666" stroke-width="0.65" stroke-opacity="0.17"/>
<line x1="505.3" y1="295.9" x2="514.7" y2="299.2" stroke="#666" stroke-width="0.65" stroke-opacity="0.18"/>
<line x1="514.7" y1="299.2" x2="524.6" y2="302.6" stroke="#666" stroke-width="0.65" stroke-opacity="0.19"/>
<line x1="524.6" y1="302.6" x2="535.1" y2="306.2" stroke="#666" stroke-width="0.65" stroke-opacity="0.20"/>
<line x1="535.1" y1="306.2" x2="546.3" y2="310.0" stroke="#666" stroke-width="0.65" stroke-opacity="0.21"/>
<line x1="546.3" y1="310.0" x2="558.1" y2="314.1" stroke="#666" stroke-width="0.65" stroke-opacity="0.22"/>
<line x1="558.1" y1="314.1" x2="570.7" y2="318.4" stroke="#666" stroke-width="0.65" stroke-opacity="0.23"/>
<line x1="570.7" y1="318.4" x2="584.1" y2="323.0" stroke="#666" stroke-width="0.65" stroke-opacity="0.24"/>
<line x1="584.1" y1="323.0" x2="598.5" y2="328.0" stroke="#666" stroke-width="0.65" stroke-opacity="0.25"/>
<line x1="598.5" y1="328.0" x2="613.9" y2="333.3" stroke="#666" stroke-width="0.65" stroke-opacity="0.26"/>
<line x1="613.9" y1="333.3" x2="630.4" y2="339.0" stroke="#666" stroke-width="0.65" stroke-opacity="0.26"/>
<line x1="630.4" y1="339.0" x2="648.2" y2="345.1" stroke="#666" stroke-width="0.65" stroke-opacity="0.26"/>
<line x1="648.2" y1="345.1" x2="667.4" y2="351.7" stroke="#666" stroke-width="0.65" stroke-opacity="0.26"/>
<line x1="667.4" y1="351.7" x2="688.2" y2="358.8" stroke="#666" stroke-width="0.65" stroke-opacity="0.26"/>
<line x1="688.2" y1="358.8" x2="710.8" y2="366.6" stroke="#666" stroke-width="0.65" stroke-opacity="0.26"/>
<line x1="489.0" y1="275.0" x2="496.3" y2="277.2" stroke="#666" stroke-width="0.65" stroke-opacity="0.09"/>
<line x1="496.3" y1="277.2" x2="504.0" y2="279.5" stroke="#666" stroke-width="0.65" stroke-opacity="0.10"/>
<line x1="504.0" y1="279.5" x2="512.0" y2="281.9" stroke="#666" stroke-width="0.65" stroke-opacity="0.11"/>
<line x1="512.0" y1="281.9" x2="520.5" y2="284.4" stroke="#666" stroke-width="0.65" stroke-opacity="0.12"/>
<line x1="520.5" y1="284.4" x2="529.3" y2="287.0" stroke="#666" stroke-width="0.65" stroke-opacity="0.13"/>
<line x1="529.3" y1="287.0" x2="538.7" y2="289.8" stroke="#666" stroke-width="0.65" stroke-opacity="0.14"/>
<line x1="538.7" y1="289.8" x2="548.5" y2="292.7" stroke="#666" stroke-width="0.65" stroke-opacity="0.15"/>
<line x1="548.5" y1="292.7" x2="558.8" y2="295.7" stroke="#666" stroke-width="0.65" stroke-opacity="0.16"/>
<line x1="558.8" y1="295.7" x2="569.7" y2="299.0" stroke="#666" stroke-width="0.65" stroke-opacity="0.17"/>
<line x1="569.7" y1="299.0" x2="581.3" y2="302.4" stroke="#666" stroke-width="0.65" stroke-opacity="0.18"/>
<line x1="581.3" y1="302.4" x2="593.5" y2="306.0" stroke="#666" stroke-width="0.65" stroke-opacity="0.19"/>
<line x1="593.5" y1="306.0" x2="606.4" y2="309.8" stroke="#666" stroke-width="0.65" stroke-opacity="0.20"/>
<line x1="606.4" y1="309.8" x2="620.2" y2="313.9" stroke="#666" stroke-width="0.65" stroke-opacity="0.21"/>
<line x1="620.2" y1="313.9" x2="634.9" y2="318.3" stroke="#666" stroke-width="0.65" stroke-opacity="0.22"/>
<line x1="634.9" y1="318.3" x2="650.5" y2="322.9" stroke="#666" stroke-width="0.65" stroke-opacity="0.23"/>
<line x1="650.5" y1="322.9" x2="667.2" y2="327.9" stroke="#666" stroke-width="0.65" stroke-opacity="0.24"/>
<line x1="667.2" y1="327.9" x2="685.1" y2="333.2" stroke="#666" stroke-width="0.65" stroke-opacity="0.25"/>
<line x1="685.1" y1="333.2" x2="704.4" y2="338.9" stroke="#666" stroke-width="0.65" stroke-opacity="0.25"/>
<line x1="704.4" y1="338.9" x2="725.1" y2="345.0" stroke="#666" stroke-width="0.65" stroke-opacity="0.25"/>
<line x1="725.1" y1="345.0" x2="747.5" y2="351.7" stroke="#666" stroke-width="0.65" stroke-opacity="0.25"/>
<line x1="510.0" y1="268.8" x2="517.4" y2="270.7" stroke="#666" stroke-width="0.65" stroke-opacity="0.06"/>
<line x1="517.4" y1="270.7" x2="525.0" y2="272.7" stroke="#666" stroke-width="0.65" stroke-opacity="0.07"/>
<line x1="525.0" y1="272.7" x2="533.0" y2="274.8" stroke="#666" stroke-width="0.65" stroke-opacity="0.08"/>
<line x1="533.0" y1="274.8" x2="541.4" y2="277.0" stroke="#666" stroke-width="0.65" stroke-opacity="0.09"/>
<line x1="541.4" y1="277.0" x2="550.2" y2="279.3" stroke="#666" stroke-width="0.65" stroke-opacity="0.10"/>
<line x1="550.2" y1="279.3" x2="559.3" y2="281.6" stroke="#666" stroke-width="0.65" stroke-opacity="0.11"/>
<line x1="559.3" y1="281.6" x2="569.0" y2="284.1" stroke="#666" stroke-width="0.65" stroke-opacity="0.11"/>
<line x1="569.0" y1="284.1" x2="579.1" y2="286.8" stroke="#666" stroke-width="0.65" stroke-opacity="0.12"/>
<line x1="579.1" y1="286.8" x2="589.7" y2="289.5" stroke="#666" stroke-width="0.65" stroke-opacity="0.13"/>
<line x1="589.7" y1="289.5" x2="600.9" y2="292.5" stroke="#666" stroke-width="0.65" stroke-opacity="0.14"/>
<line x1="600.9" y1="292.5" x2="612.7" y2="295.5" stroke="#666" stroke-width="0.65" stroke-opacity="0.15"/>
<line x1="612.7" y1="295.5" x2="625.2" y2="298.8" stroke="#666" stroke-width="0.65" stroke-opacity="0.16"/>
<line x1="625.2" y1="298.8" x2="638.3" y2="302.2" stroke="#666" stroke-width="0.65" stroke-opacity="0.17"/>
<line x1="638.3" y1="302.2" x2="652.3" y2="305.8" stroke="#666" stroke-width="0.65" stroke-opacity="0.18"/>
<line x1="652.3" y1="305.8" x2="667.1" y2="309.7" stroke="#666" stroke-width="0.65" stroke-opacity="0.19"/>
<line x1="667.1" y1="309.7" x2="682.8" y2="313.8" stroke="#666" stroke-width="0.65" stroke-opacity="0.20"/>
<line x1="682.8" y1="313.8" x2="699.6" y2="318.1" stroke="#666" stroke-width="0.65" stroke-opacity="0.21"/>
<line x1="699.6" y1="318.1" x2="717.4" y2="322.8" stroke="#666" stroke-width="0.65" stroke-opacity="0.22"/>
<line x1="717.4" y1="322.8" x2="736.5" y2="327.7" stroke="#666" stroke-width="0.65" stroke-opacity="0.23"/>
<line x1="736.5" y1="327.7" x2="757.0" y2="333.1" stroke="#666" stroke-width="0.65" stroke-opacity="0.24"/>
<line x1="528.7" y1="263.3" x2="536.0" y2="265.0" stroke="#666" stroke-width="0.65" stroke-opacity="0.06"/>
<line x1="536.0" y1="265.0" x2="543.6" y2="266.7" stroke="#666" stroke-width="0.65" stroke-opacity="0.08"/>
<line x1="543.6" y1="266.7" x2="551.5" y2="268.6" stroke="#666" stroke-width="0.65" stroke-opacity="0.10"/>
<line x1="551.5" y1="268.6" x2="559.8" y2="270.5" stroke="#666" stroke-width="0.65" stroke-opacity="0.12"/>
<line x1="559.8" y1="270.5" x2="568.4" y2="272.5" stroke="#666" stroke-width="0.65" stroke-opacity="0.14"/>
<line x1="568.4" y1="272.5" x2="577.4" y2="274.6" stroke="#666" stroke-width="0.65" stroke-opacity="0.16"/>
<line x1="577.4" y1="274.6" x2="586.8" y2="276.7" stroke="#666" stroke-width="0.65" stroke-opacity="0.18"/>
<line x1="586.8" y1="276.7" x2="596.6" y2="279.0" stroke="#666" stroke-width="0.65" stroke-opacity="0.20"/>
<line x1="596.6" y1="279.0" x2="606.9" y2="281.4" stroke="#666" stroke-width="0.65" stroke-opacity="0.22"/>
<line x1="606.9" y1="281.4" x2="617.8" y2="283.9" stroke="#666" stroke-width="0.65" stroke-opacity="0.24"/>
<line x1="617.8" y1="283.9" x2="629.1" y2="286.6" stroke="#666" stroke-width="0.65" stroke-opacity="0.26"/>
<line x1="629.1" y1="286.6" x2="641.1" y2="289.3" stroke="#666" stroke-width="0.65" stroke-opacity="0.27"/>
<line x1="641.1" y1="289.3" x2="653.7" y2="292.2" stroke="#666" stroke-width="0.65" stroke-opacity="0.29"/>
<line x1="653.7" y1="292.2" x2="667.0" y2="295.3" stroke="#666" stroke-width="0.65" stroke-opacity="0.31"/>
<line x1="667.0" y1="295.3" x2="681.0" y2="298.6" stroke="#666" stroke-width="0.65" stroke-opacity="0.33"/>
<line x1="681.0" y1="298.6" x2="695.8" y2="302.0" stroke="#666" stroke-width="0.65" stroke-opacity="0.35"/>
<line x1="695.8" y1="302.0" x2="711.5" y2="305.6" stroke="#666" stroke-width="0.65" stroke-opacity="0.37"/>
<line x1="711.5" y1="305.6" x2="728.2" y2="309.5" stroke="#666" stroke-width="0.65" stroke-opacity="0.39"/>
<line x1="728.2" y1="309.5" x2="745.9" y2="313.6" stroke="#666" stroke-width="0.65" stroke-opacity="0.41"/>
<line x1="745.9" y1="313.6" x2="764.8" y2="318.0" stroke="#666" stroke-width="0.65" stroke-opacity="0.43"/>
<line x1="560.1" y1="261.4" x2="567.9" y2="263.1" stroke="#666" stroke-width="0.65" stroke-opacity="0.02"/>
<line x1="567.9" y1="263.1" x2="576.0" y2="264.8" stroke="#666" stroke-width="0.65" stroke-opacity="0.03"/>
<line x1="576.0" y1="264.8" x2="584.4" y2="266.5" stroke="#666" stroke-width="0.65" stroke-opacity="0.04"/>
<line x1="584.4" y1="266.5" x2="593.2" y2="268.3" stroke="#666" stroke-width="0.65" stroke-opacity="0.05"/>
<line x1="593.2" y1="268.3" x2="602.4" y2="270.3" stroke="#666" stroke-width="0.65" stroke-opacity="0.06"/>
<line x1="602.4" y1="270.3" x2="612.0" y2="272.2" stroke="#666" stroke-width="0.65" stroke-opacity="0.07"/>
<line x1="612.0" y1="272.2" x2="622.0" y2="274.3" stroke="#666" stroke-width="0.65" stroke-opacity="0.08"/>
<line x1="622.0" y1="274.3" x2="632.4" y2="276.5" stroke="#666" stroke-width="0.65" stroke-opacity="0.08"/>
<line x1="632.4" y1="276.5" x2="643.4" y2="278.8" stroke="#666" stroke-width="0.65" stroke-opacity="0.09"/>
<line x1="643.4" y1="278.8" x2="654.8" y2="281.2" stroke="#666" stroke-width="0.65" stroke-opacity="0.10"/>
<line x1="654.8" y1="281.2" x2="666.9" y2="283.7" stroke="#666" stroke-width="0.65" stroke-opacity="0.11"/>
<line x1="666.9" y1="283.7" x2="679.5" y2="286.3" stroke="#666" stroke-width="0.65" stroke-opacity="0.12"/>
<line x1="679.5" y1="286.3" x2="692.8" y2="289.1" stroke="#666" stroke-width="0.65" stroke-opacity="0.13"/>
<line x1="692.8" y1="289.1" x2="706.9" y2="292.0" stroke="#666" stroke-width="0.65" stroke-opacity="0.14"/>
<line x1="706.9" y1="292.0" x2="721.6" y2="295.1" stroke="#666" stroke-width="0.65" stroke-opacity="0.15"/>
<line x1="721.6" y1="295.1" x2="737.2" y2="298.4" stroke="#666" stroke-width="0.65" stroke-opacity="0.16"/>
<line x1="737.2" y1="298.4" x2="753.8" y2="301.8" stroke="#666" stroke-width="0.65" stroke-opacity="0.16"/>
<line x1="753.8" y1="301.8" x2="771.3" y2="305.4" stroke="#666" stroke-width="0.65" stroke-opacity="0.17"/>
<line x1="598.7" y1="261.2" x2="607.3" y2="262.8" stroke="#666" stroke-width="0.65" stroke-opacity="0.02"/>
<line x1="607.3" y1="262.8" x2="616.2" y2="264.5" stroke="#666" stroke-width="0.65" stroke-opacity="0.03"/>
<line x1="616.2" y1="264.5" x2="625.5" y2="266.3" stroke="#666" stroke-width="0.65" stroke-opacity="0.04"/>
<line x1="625.5" y1="266.3" x2="635.2" y2="268.1" stroke="#666" stroke-width="0.65" stroke-opacity="0.05"/>
<line x1="635.2" y1="268.1" x2="645.3" y2="270.0" stroke="#666" stroke-width="0.65" stroke-opacity="0.06"/>
<line x1="645.3" y1="270.0" x2="655.8" y2="272.0" stroke="#666" stroke-width="0.65" stroke-opacity="0.07"/>
<line x1="655.8" y1="272.0" x2="666.8" y2="274.1" stroke="#666" stroke-width="0.65" stroke-opacity="0.07"/>
<line x1="666.8" y1="274.1" x2="678.3" y2="276.3" stroke="#666" stroke-width="0.65" stroke-opacity="0.08"/>
<line x1="678.3" y1="276.3" x2="690.4" y2="278.6" stroke="#666" stroke-width="0.65" stroke-opacity="0.09"/>
<line x1="690.4" y1="278.6" x2="703.0" y2="281.0" stroke="#666" stroke-width="0.65" stroke-opacity="0.10"/>
<line x1="703.0" y1="281.0" x2="716.3" y2="283.5" stroke="#666" stroke-width="0.65" stroke-opacity="0.11"/>
<line x1="716.3" y1="283.5" x2="730.3" y2="286.1" stroke="#666" stroke-width="0.65" stroke-opacity="0.12"/>
<line x1="730.3" y1="286.1" x2="744.9" y2="288.9" stroke="#666" stroke-width="0.65" stroke-opacity="0.13"/>
<line x1="744.9" y1="288.9" x2="760.4" y2="291.8" stroke="#666" stroke-width="0.65" stroke-opacity="0.14"/>
<line x1="760.4" y1="291.8" x2="776.7" y2="294.9" stroke="#666" stroke-width="0.65" stroke-opacity="0.15"/>
<line x1="637.5" y1="261.0" x2="646.9" y2="262.6" stroke="#666" stroke-width="0.65" stroke-opacity="0.02"/>
<line x1="646.9" y1="262.6" x2="656.6" y2="264.3" stroke="#666" stroke-width="0.65" stroke-opacity="0.03"/>
<line x1="656.6" y1="264.3" x2="666.8" y2="266.0" stroke="#666" stroke-width="0.65" stroke-opacity="0.04"/>
<line x1="666.8" y1="266.0" x2="677.3" y2="267.9" stroke="#666" stroke-width="0.65" stroke-opacity="0.05"/>
<line x1="677.3" y1="267.9" x2="688.4" y2="269.8" stroke="#666" stroke-width="0.65" stroke-opacity="0.06"/>
<line x1="688.4" y1="269.8" x2="699.9" y2="271.8" stroke="#666" stroke-width="0.65" stroke-opacity="0.07"/>
<line x1="699.9" y1="271.8" x2="711.9" y2="273.9" stroke="#666" stroke-width="0.65" stroke-opacity="0.07"/>
<line x1="711.9" y1="273.9" x2="724.5" y2="276.0" stroke="#666" stroke-width="0.65" stroke-opacity="0.08"/>
<line x1="724.5" y1="276.0" x2="737.7" y2="278.3" stroke="#666" stroke-width="0.65" stroke-opacity="0.09"/>
<line x1="737.7" y1="278.3" x2="751.6" y2="280.7" stroke="#666" stroke-width="0.65" stroke-opacity="0.10"/>
<line x1="751.6" y1="280.7" x2="766.1" y2="283.2" stroke="#666" stroke-width="0.65" stroke-opacity="0.11"/>
<line x1="766.1" y1="283.2" x2="781.3" y2="285.9" stroke="#666" stroke-width="0.65" stroke-opacity="0.12"/>
<line x1="676.5" y1="260.7" x2="686.6" y2="262.3" stroke="#666" stroke-width="0.65" stroke-opacity="0.02"/>
<line x1="686.6" y1="262.3" x2="697.2" y2="264.0" stroke="#666" stroke-width="0.65" stroke-opacity="0.03"/>
<line x1="697.2" y1="264.0" x2="708.2" y2="265.8" stroke="#666" stroke-width="0.65" stroke-opacity="0.04"/>
<line x1="708.2" y1="265.8" x2="719.7" y2="267.6" stroke="#666" stroke-width="0.65" stroke-opacity="0.05"/>
<line x1="719.7" y1="267.6" x2="731.7" y2="269.5" stroke="#666" stroke-width="0.65" stroke-opacity="0.06"/>
<line x1="731.7" y1="269.5" x2="744.2" y2="271.5" stroke="#666" stroke-width="0.65" stroke-opacity="0.07"/>
<line x1="744.2" y1="271.5" x2="757.3" y2="273.6" stroke="#666" stroke-width="0.65" stroke-opacity="0.08"/>
<line x1="757.3" y1="273.6" x2="771.0" y2="275.8" stroke="#666" stroke-width="0.65" stroke-opacity="0.08"/>
<line x1="771.0" y1="275.8" x2="785.3" y2="278.1" stroke="#666" stroke-width="0.65" stroke-opacity="0.09"/>
<line x1="715.7" y1="260.5" x2="726.6" y2="262.1" stroke="#666" stroke-width="0.65" stroke-opacity="0.02"/>
<line x1="726.6" y1="262.1" x2="738.1" y2="263.8" stroke="#666" stroke-width="0.65" stroke-opacity="0.03"/>
<line x1="738.1" y1="263.8" x2="750.0" y2="265.6" stroke="#666" stroke-width="0.65" stroke-opacity="0.04"/>
<line x1="750.0" y1="265.6" x2="762.4" y2="267.4" stroke="#666" stroke-width="0.65" stroke-opacity="0.05"/>
<line x1="762.4" y1="267.4" x2="775.3" y2="269.3" stroke="#666" stroke-width="0.65" stroke-opacity="0.06"/>
<line x1="775.3" y1="269.3" x2="788.8" y2="271.3" stroke="#666" stroke-width="0.65" stroke-opacity="0.07"/>
<polygon points="564.0,247.2 576.5,244.4 576.5,268.4 565.0,273.4" fill="#45464a" />
<polygon points="567.3,248.6 569.6,248.0 569.6,269.6 567.3,270.6" fill="#7c7868" />
<polygon points="570.8,247.8 576.5,246.4 576.5,266.2 570.8,268.8" fill="#8b8675" />
<polygon points="519.6,186.0 546.0,164.0 577.0,178.0 577.0,187.0 563.4,193.5 564.4,298.8 555.0,297.2 526.2,286.6" fill="#383a3c" />
<polygon points="521.7,193.9 531.1,188.2 536.5,286.1 527.0,282.8" fill="#524e46" />
<polygon points="533.9,186.5 545.2,179.8 550.4,290.9 539.2,287.0" fill="#524e46" />
<polygon points="548.3,177.9 550.7,176.5 555.8,292.8 553.5,292.0" fill="#524e46" />
<polygon points="555.0,173.6 559.0,171.6 563.9,298.1 560.1,296.7" fill="#4f5052" />
<polygon points="574.8,173.5 629.5,200.8 628.0,317.0 580.6,302.8" fill="#383a3c" />
<polygon points="580.9,181.2 592.7,186.9 595.1,304.6 584.1,301.1" fill="#4f4b44" />
<polygon points="596.9,188.9 612.3,196.3 613.4,310.6 599.0,305.9" fill="#4f4b44" />
<polygon points="616.2,198.2 622.3,201.2 622.8,313.6 617.0,311.7" fill="#55514a" />
<polygon points="625.3,202.7 627.6,203.8 627.7,315.2 625.6,314.6" fill="#6a665a" />
<polygon points="628.5,204.0 700.8,193.6 698.2,275.5 628.0,317.0" fill="#424447" />
<polygon points="630.5,206.5 638.4,205.5 637.9,308.8 630.5,313.4" fill="#87816f" />
<polygon points="641.7,205.1 649.9,204.0 648.8,302.1 641.0,306.9" fill="#87816f" />
<polygon points="653.1,203.5 657.0,203.0 655.6,297.9 651.9,300.2" fill="#87816f" />
<polygon points="661.3,202.5 667.8,201.6 666.6,259.6 660.2,262.3" fill="#4f4b42" />
<polygon points="660.6,265.3 666.1,262.6 665.6,290.3 660.1,294.1" fill="#87816f" />
<polygon points="670.0,201.3 679.0,200.1 677.5,255.0 668.8,258.7" fill="#4f4b42" />
<polygon points="669.1,261.7 677.1,258.0 676.4,283.7 668.5,289.0" fill="#87816f" />
<polygon points="683.5,199.6 688.0,199.0 685.4,280.1 681.1,282.7" fill="#87816f" />
<polygon points="689.9,198.7 693.9,198.2 691.2,276.7 687.3,279.0" fill="#87816f" />
<polygon points="695.8,197.9 699.0,197.5 696.2,273.7 693.0,275.6" fill="#87816f" />
<polygon points="545.7,157.0 487.1,193.0 496.3,194.0 496.3,200.2 502.0,199.6 503.0,196.4 548.5,171.0 551.0,162.0" fill="#34373a" />
<polygon points="545.7,157.0 487.1,193.0 496.5,193.9 548.0,164.0" fill="#2d3034" />
<polygon points="514.6,192.2 520.3,189.0 520.3,198.2 514.6,198.7" fill="#303234" />
<polygon points="545.7,157.0 636.0,201.3 636.5,206.6 629.0,204.0 548.0,164.6" fill="#2b2d30" />
<polygon points="548.0,160.8 555.6,163.6 555.6,167.4 548.0,165.2" fill="#55585c" />
<polygon points="563.4,190.4 574.6,185.4 574.6,188.6 563.4,194.0" fill="#4c4d50" />
<polygon points="636.0,201.3 724.0,189.5 724.0,192.2 700.8,195.6 700.8,196.0 636.5,205.5" fill="#38393b" />
<polygon points="636.5,201.7 648.0,200.2 648.0,201.2 640.5,208.1 640.5,210.5 636.5,211.6" fill="#37393c" />
<polygon points="636.9,208.6 640.5,207.5 640.5,210.5 636.9,211.6" fill="#54575a" />
<polygon points="654.8,199.3 666.3,197.7 666.3,198.7 658.8,205.2 658.8,207.6 654.8,208.8" fill="#37393c" />
<polygon points="655.2,205.8 658.8,204.6 658.8,207.6 655.2,208.8" fill="#54575a" />
<polygon points="667.5,197.6 679.1,196.0 679.1,197.0 671.6,202.5 671.6,204.9 667.5,206.1" fill="#37393c" />
<polygon points="667.9,203.1 671.6,201.9 671.6,204.9 667.9,206.1" fill="#54575a" />
<polygon points="679.5,196.0 689.9,194.6 689.9,195.6 682.4,200.6 682.4,203.0 679.5,204.0" fill="#37393c" />
<polygon points="679.9,201.0 682.4,200.0 682.4,203.0 679.9,204.0" fill="#54575a" />
<polygon points="688.7,194.7 699.5,193.3 699.5,194.3 692.0,198.4 692.0,200.8 688.7,201.8" fill="#37393c" />
<polygon points="689.1,198.8 692.0,197.8 692.0,200.8 689.1,201.8" fill="#54575a" />
<polygon points="697.2,193.6 708.2,192.1 708.2,193.1 700.7,197.0 700.7,199.4 697.2,200.5" fill="#37393c" />
<polygon points="697.6,197.5 700.7,196.4 700.7,199.4 697.6,200.5" fill="#54575a" />
<polygon points="704.2,192.7 715.1,191.2 715.1,192.2 707.6,195.6 707.6,198.0 704.2,199.1" fill="#37393c" />
<polygon points="704.6,196.1 707.6,195.0 707.6,198.0 704.6,199.1" fill="#54575a" />
<polygon points="711.3,191.7 721.6,190.3 721.6,191.3 714.1,194.2 714.1,196.6 711.3,197.6" fill="#37393c" />
<polygon points="711.7,194.6 714.1,193.6 714.1,196.6 711.7,197.6" fill="#54575a" />
<polygon points="719.4,190.6 724.0,190.0 724.0,191.0 723.6,192.6 723.6,195.0 719.4,196.1" fill="#37393c" />
<polygon points="719.8,193.1 723.6,192.0 723.6,195.0 719.8,196.1" fill="#54575a" />
<polygon points="545.7,157.0 662.5,163.8 724.0,189.5 636.0,201.4" fill="#8c959d" />
<polygon points="526.0,282.0 528.4,282.0 528.4,294.4 526.0,294.4" fill="#9b9582" />
<polygon points="528.4,287.5 530.6,287.5 530.6,294.6 528.4,294.6" fill="#9b9582" />
<polygon points="538.6,290.4 543.0,290.4 543.0,295.2 538.6,295.2" fill="#9b9582" />
<polygon points="550.4,291.0 553.4,291.0 553.4,296.8 550.4,296.8" fill="#9b9582" />
<polygon points="553.4,290.2 556.0,290.2 556.0,304.6 553.4,304.6" fill="#9b9582" />
<polygon points="556.0,296.5 561.0,296.5 561.0,304.2 556.0,304.2" fill="#9b9582" />
<polygon points="562.0,268.6 566.0,268.6 566.0,280.6 562.0,280.6" fill="#9b9582" />
<polygon points="581.0,298.0 583.6,298.0 583.6,313.6 581.0,313.6" fill="#9b9582" />
<polygon points="583.6,304.5 589.6,304.5 589.6,313.0 583.6,313.0" fill="#9b9582" />
<polygon points="598.2,308.2 604.6,308.2 604.6,314.2 598.2,314.2" fill="#9b9582" />
<polygon points="613.2,309.0 619.5,309.0 619.5,318.6 613.2,318.6" fill="#9b9582" />
<polygon points="619.5,309.5 622.3,309.5 622.3,325.8 619.5,325.8" fill="#9b9582" />
<polygon points="622.3,318.0 625.6,318.0 625.6,325.6 622.3,325.6" fill="#9b9582" />
<polygon points="626.6,308.4 629.6,308.4 629.6,325.2 626.6,325.2" fill="#9b9582" />
<polygon points="629.6,310.6 632.0,310.6 632.0,316.5 629.6,316.5" fill="#9b9582" />
<polygon points="632.0,310.4 637.0,310.4 637.0,316.6 632.0,316.6" fill="#9b9582" />
<polygon points="643.4,303.2 647.8,303.2 647.8,309.6 643.4,309.6" fill="#9b9582" />
<polygon points="653.0,297.6 656.6,297.6 656.6,304.6 653.0,304.6" fill="#9b9582" />
<polygon points="656.6,290.4 659.8,290.4 659.8,304.4 656.6,304.4" fill="#9b9582" />
<polygon points="676.4,280.6 680.0,280.6 680.0,288.0 676.4,288.0" fill="#9b9582" />
<polygon points="680.0,275.6 682.6,275.6 682.6,287.6 680.0,287.6" fill="#9b9582" />
<polygon points="686.8,273.8 691.0,273.8 691.0,278.4 686.8,278.4" fill="#9b9582" />
<polygon points="694.4,265.2 698.6,265.2 698.6,275.2 694.4,275.2" fill="#9b9582" />
<polygon points="654.4,290.4 656.6,290.4 656.6,297.6 654.4,297.6" fill="#9b9582" />
<line x1="466.4" y1="342.6" x2="466.4" y2="333.5" stroke="#2b2b90" stroke-width="1.20" />
<polygon points="465.0,334.0 467.8,334.0 466.4,330.6" fill="#2b2b90" />
<line x1="466.4" y1="342.8" x2="474.5" y2="343.6" stroke="#8c3232" stroke-width="1.30" />
<polygon points="474.0,342.2 477.4,343.9 474.0,345.2" fill="#8c3232" />
<polygon points="468.2,342.4 470.8,340.2 471.4,342.6" fill="#2f8a3a" />
<text x="466.5" y="329.2" font-size="4.8" opacity="0.98" text-anchor="middle" fill="#222" font-family="Liberation Sans, sans-serif">Z</text>
<text x="481.6" y="346.3" font-size="4.8" opacity="0.98" text-anchor="middle" fill="#222" font-family="Liberation Sans, sans-serif">X</text>
<text x="473" y="342" font-size="3.4" opacity="0.98" text-anchor="middle" fill="#444" font-family="Liberation Sans, sans-serif">Y</text>
<ellipse cx="792.5" cy="349.3" rx="13.6" ry="4.2" fill="none" stroke="#c6c6c6" stroke-width="2.0"/>
<polygon points="784.0,337.3 794.3,337.6 794.3,350.6 784.0,347.0" fill="#70bd70" />
<polygon points="794.3,337.6 800.2,336.8 800.2,347.0 794.3,350.6" fill="#f47a7a" />
<polygon points="784.0,337.3 791.0,336.4 800.2,336.8 794.3,337.6" fill="#8c8cf0" />
<text x="789.1" y="346.2" font-size="6.2" fill="#eaffea" text-anchor="middle" font-family="Liberation Sans, sans-serif">B</text>
<text x="797.3" y="346" font-size="6.2" fill="#ffecec" text-anchor="middle" font-family="Liberation Sans, sans-serif" textLength="3.6" lengthAdjust="spacingAndGlyphs">R</text>
<rect x="451.8" y="90.4" width="7.2" height="7.2" rx="0.8" fill="#4a4038"/>
<rect x="453.4" y="91.6" width="4" height="1.2" fill="#d8d0c0"/>
<rect x="454.7" y="92.6" width="1.5" height="4" fill="#d8d0c0"/>
<line x1="755.8" y1="94.6" x2="760.8" y2="94.6" stroke="#333" stroke-width="0.80" />
<rect x="777.2" y="91.8" width="4.5" height="4.8" fill="none" stroke="#3a3a3a" stroke-width="0.7"/>
<line x1="797.9" y1="91.9" x2="802.9" y2="96.9" stroke="#333" stroke-width="0.80" />
<line x1="802.9" y1="91.9" x2="797.9" y2="96.9" stroke="#333" stroke-width="0.80" />
</svg>
<span class="t" style="left:14.3px;top:4.6px;font-size:5.4px;color:#222;">Extruded View</span>
</div>
</body></html>
